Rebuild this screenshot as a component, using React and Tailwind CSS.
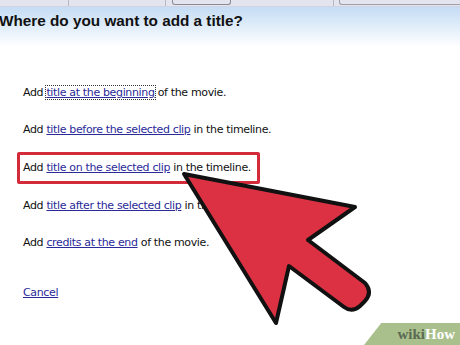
import React from "react";

const rows = [
  { link: "title at the beginning", rest: " of the movie.", focus: true },
  { link: "title before the selected clip", rest: " in the timeline." },
  { link: "title on the selected clip", rest: " in the timeline.", boxed: true },
  { link: "title after the selected clip", rest: " in the timeline." },
  { link: "credits at the end", rest: " of the movie." },
];

const Arrow = () => (
  <svg className="absolute left-0 top-0" width="460" height="345" viewBox="0 0 460 345">
    <path
      d="M184 174 L355 207 L308 240 L365 283 Q373 292 365 301 L360 306 Q352 313 344 307 L289 266 L276 323 Z"
      fill="#dc3142"
      stroke="#111"
      strokeWidth="4"
      strokeLinejoin="round"
    />
  </svg>
);

const App = () => {
  return (
    <div className="relative w-[460px] h-[345px] overflow-hidden bg-white font-['DejaVu_Sans',sans-serif]">
      {/* window chrome strip */}
      <div className="h-[7px] bg-[#e4e4ee] border-b border-[#d2d4de] flex items-start text-[0px]">
        <div className="w-[69px] h-full border-r border-[#b8b8c4]" />
        <div className="w-[97px] h-full border-r border-[#b8b8c4]" />
        <div className="ml-[6px] w-[59px] h-[5px] border border-t-0 border-[#8a8a96] rounded-b-[3px]" />
        <div className="ml-[97px] w-[6px] h-full border-r border-[#b8b8c4]" />
        <div className="ml-[5px] flex-1 h-[5px] border border-t-0 border-r-0 border-[#a0a0ac] rounded-bl-[3px]" />
      </div>

      <div className="h-[40px] bg-gradient-to-b from-[#c4dcf4] to-white pt-[5px]">
        <h1 className="-ml-[1px] text-[15.3px] leading-[18px] font-bold text-[#111] font-['Liberation_Sans',Arial,sans-serif]">
          Where do you want to add a title?
        </h1>
      </div>

      <div className="flex flex-col gap-[23px] pt-[39px] pl-[23px] text-[11px] leading-[14px] text-[#111] tracking-[-0.35px]">
        {rows.map((r) =>
          r.boxed ? (
            <div key={r.link} className="-ml-[6px] -my-[8px] w-[243px] py-[6px] pl-[3px] border-[3px] border-[#d42b3b] rounded-[2px]">
              Add <span className="text-[#2a2a99] underline">{r.link}</span>
              {r.rest}
            </div>
          ) : (
            <div key={r.link}>
              Add{" "}
              <span className={`text-[#2a2a99] underline ${r.focus ? "outline outline-1 outline-dotted outline-[#333]" : ""}`}>
                {r.link}
              </span>
              {r.rest}
            </div>
          )
        )}
        <div className="mt-[13px] text-[#2a2a99] underline">Cancel</div>
      </div>

      <Arrow />

      <div className="absolute right-0 bottom-0 w-[96px] h-[22px] bg-[#a9c08d] [clip-path:polygon(18%_0,100%_0,100%_100%,0_100%)] flex items-center justify-end pr-[5px] font-['Liberation_Serif',serif] font-bold text-[15px]">
        <span className="text-[#5b6a52]">wiki</span>
        <span className="text-white">How</span>
      </div>
    </div>
  );
};

export default App;
